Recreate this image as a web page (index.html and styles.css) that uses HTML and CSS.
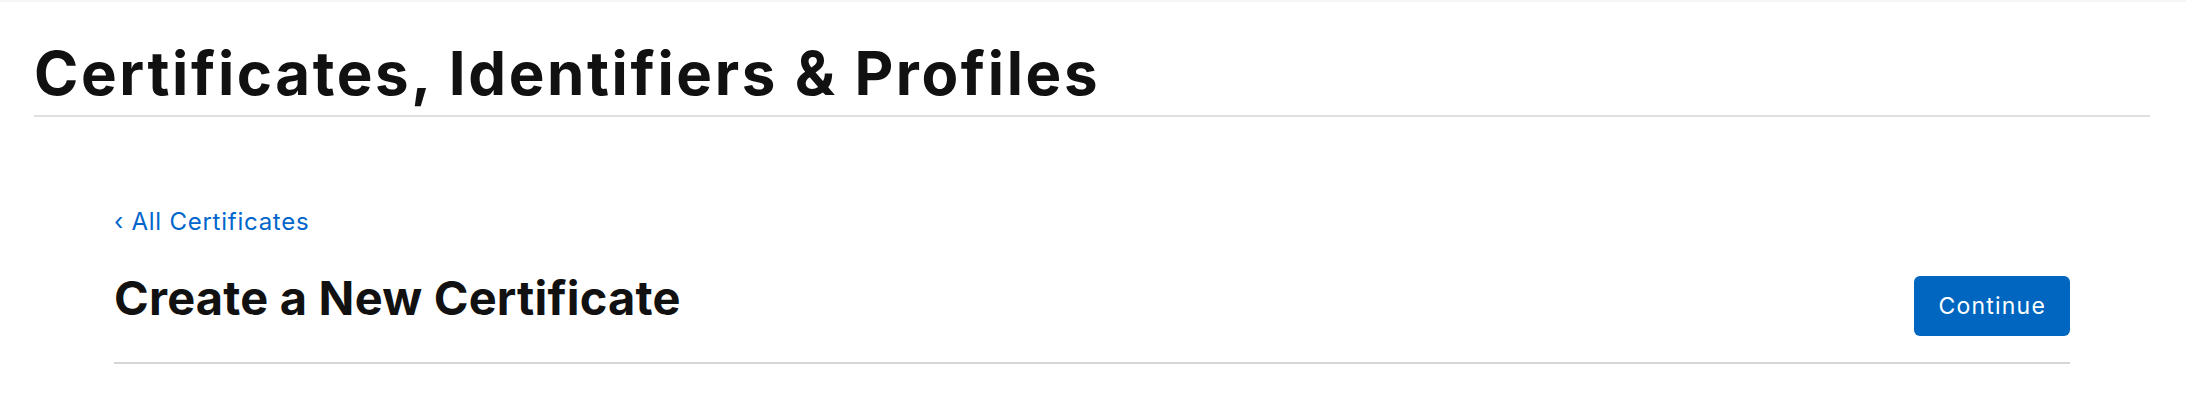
FILE: index.html
```html
<!DOCTYPE html>
<html lang="en">
<head>
    <meta charset="UTF-8">
    <meta name="viewport" content="width=device-width, initial-scale=1.0">
    <title>Certificates, Identifiers &amp; Profiles</title>
    <link rel="stylesheet" href="styles.css">
</head>
<body>
    <div class="topbar"></div>

    <header class="page-header">
        <h1>Certificates, Identifiers &amp; Profiles</h1>
    </header>

    <main class="content">
        <a class="back-link" href="#">&lsaquo; All Certificates</a>
        <div class="title-row">
            <h2>Create a New Certificate</h2>
            <button class="continue-btn">Continue</button>
        </div>
    </main>
</body>
</html>
```

FILE: styles.css
```css
/* Base */
body {
    margin: 0;
    background: #fff;
    color: #111;
    font-family: Inter, "Noto Sans", "Liberation Sans", sans-serif;
}

.topbar {
    height: 2px;
    background: #f5f5f5;
}

/* Page header */
.page-header {
    padding: 35px 36px 0 34px;
}

.page-header h1 {
    margin: 0;
    padding-bottom: 6px;
    font-size: 60px;
    line-height: 72px;
    font-weight: 700;
    letter-spacing: 2.6px;
    border-bottom: 2px solid #e0e0e0;
}

/* Content */
.content {
    padding: 90px 116px 0 114px;
}

.back-link {
    display: block;
    font-size: 24px;
    line-height: 29px;
    letter-spacing: 0.75px;
    color: #0066cc;
    text-decoration: none;
}

.title-row {
    display: flex;
    justify-content: space-between;
    align-items: flex-start;
    margin-top: 34px;
    padding-bottom: 26px;
    border-bottom: 2px solid #d6d6d6;
}

.title-row h2 {
    margin: 0;
    font-size: 47px;
    line-height: 56px;
    font-weight: 700;
    letter-spacing: 0.2px;
}

.continue-btn {
    margin-top: 6px;
    height: 60px;
    padding: 0 24px 0 25px;
    font-family: inherit;
    font-size: 23px;
    letter-spacing: 1.2px;
    color: #fff;
    background: #0066c0;
    border: none;
    border-radius: 6px;
    cursor: pointer;
}
```
